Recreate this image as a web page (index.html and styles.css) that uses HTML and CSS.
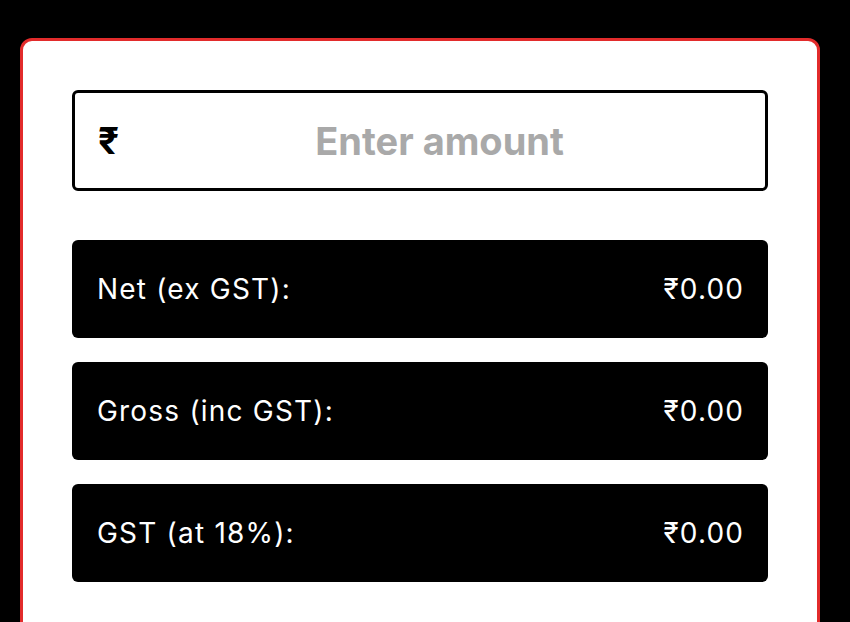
FILE: index.html
```html
<!DOCTYPE html>
<html>
<head>
<meta charset="utf-8">
<link rel="stylesheet" href="styles.css">
</head>
<body>
<div class="card">
  <label class="amount">
    <span class="amount-symbol">₹</span>
    <input class="amount-input" type="text" placeholder="Enter amount">
  </label>
  <div class="results">
    <div class="row"><span class="label">Net (ex GST):</span><span class="value">₹0.00</span></div>
    <div class="row"><span class="label">Gross (inc GST):</span><span class="value">₹0.00</span></div>
    <div class="row"><span class="label">GST (at 18%):</span><span class="value">₹0.00</span></div>
  </div>
</div>
</body>
</html>
```

FILE: styles.css
```css
* { box-sizing: border-box; }
html, body {
  margin: 0;
  background: #000;
  height: 100%;
  overflow: hidden;
}
body {
  font-family: Inter, "Liberation Sans", sans-serif;
}
.card {
  margin: 38px 0 0 20px;
  width: 800px;
  min-height: 700px;
  background: #fff;
  border: 3px solid #e22b2b;
  border-radius: 12px;
  padding: 49px 49px;
}
.amount {
  display: flex;
  align-items: center;
  height: 101px;
  border: 3px solid #000;
  border-radius: 6px;
  padding-left: 23px;
  padding-right: 5px;
}
.amount-symbol {
  font-size: 37px;
  font-weight: 700;
  color: #000;
  line-height: 1;
}
.amount-input {
  flex: 1;
  min-width: 0;
  border: none;
  outline: none;
  background: transparent;
  font-family: Inter, "Liberation Sans", sans-serif;
  font-size: 38px;
  font-weight: 700;
  text-align: center;
  color: #000;
  padding: 0;
  letter-spacing: 0;
}
.amount-input::placeholder {
  color: #a9a9a9;
  opacity: 1;
}
.results {
  margin-top: 49px;
  display: flex;
  flex-direction: column;
  gap: 24px;
}
.row {
  display: flex;
  justify-content: space-between;
  align-items: center;
  height: 98px;
  padding: 0 25px;
  background: #000;
  color: #fff;
  border-radius: 6px;
  font-size: 28px;
  letter-spacing: 1.2px;
}
.value {
  margin-right: -1.2px;
}
```
